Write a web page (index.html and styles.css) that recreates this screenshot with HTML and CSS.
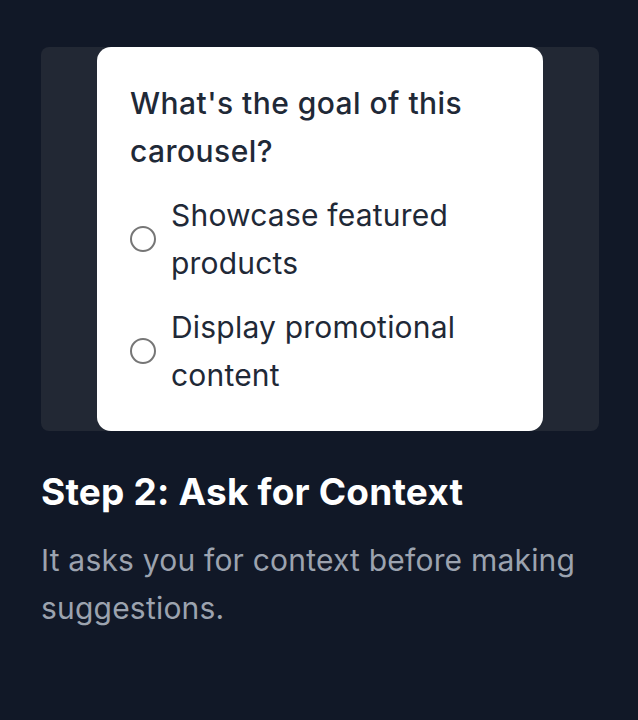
FILE: index.html
```html
<!DOCTYPE html>
<html lang="en">
<head>
<meta charset="utf-8">
<link rel="stylesheet" href="styles.css">
</head>
<body>
<div class="page">
  <div class="preview">
    <div class="card">
      <p class="question">What's the goal of this carousel?</p>
      <label class="option"><span class="radio"></span><span class="opt-text">Showcase featured products</span></label>
      <label class="option"><span class="radio"></span><span class="opt-text">Display promotional content</span></label>
    </div>
  </div>
  <h2 class="title">Step 2: Ask for Context</h2>
  <p class="desc">It asks you for context before making suggestions.</p>
</div>
</body>
</html>
```

FILE: styles.css
```css
html, body {
  margin: 0;
  padding: 0;
  background: #111827;
}
body {
  font-family: Inter, "Noto Sans", sans-serif;
  width: 638px;
  height: 720px;
  overflow: hidden;
}
.page {
  padding: 47px 39px 0 41px;
}
.preview {
  background: #222834;
  border-radius: 8px;
  display: flex;
  justify-content: center;
}
.card {
  width: 446px;
  box-sizing: border-box;
  background: #ffffff;
  border-radius: 14px;
  padding: 32px 33px;
  display: flex;
  flex-direction: column;
  gap: 16px;
  color: #1f2937;
}
.question {
  margin: 0;
  font-size: 30px;
  line-height: 48px;
  font-weight: 500;
  letter-spacing: 0.45px;
}
.option {
  display: flex;
  align-items: center;
  gap: 15px;
  font-size: 30px;
  line-height: 48px;
  font-weight: 400;
  letter-spacing: 0.2px;
}
.radio {
  flex: none;
  width: 22px;
  height: 22px;
  border: 2px solid #767676;
  border-radius: 50%;
}
.opt-text {
  flex: 1;
}
.title {
  margin: 37px 0 0;
  color: #ffffff;
  font-size: 37px;
  line-height: 48px;
  font-weight: 700;
  letter-spacing: 0.2px;
}
.desc {
  margin: 20px 0 0;
  color: #9ca3af;
  font-size: 30px;
  line-height: 48px;
  letter-spacing: 0.2px;
}
```
